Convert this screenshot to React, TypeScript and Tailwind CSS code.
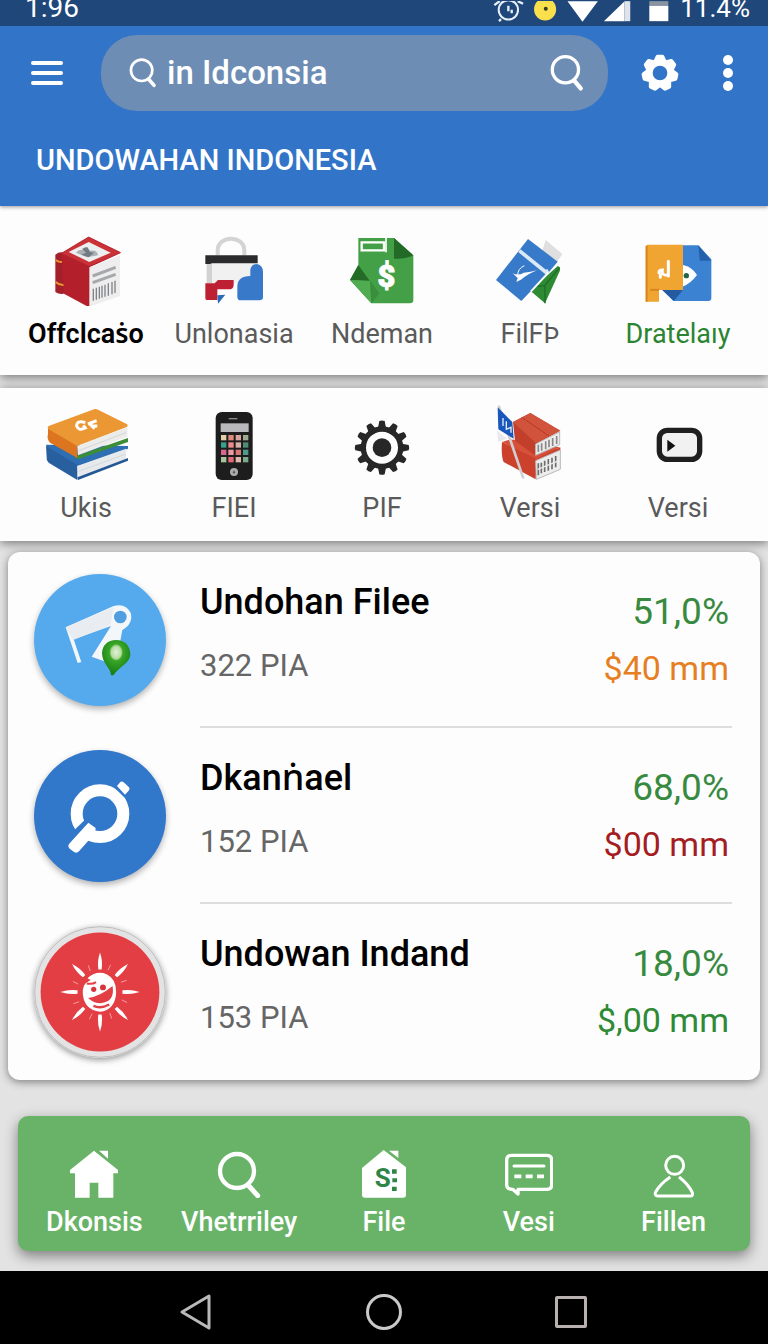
import { useState } from "react";
import type { ReactNode } from "react";
import clsx from "clsx";

interface Category {
  id: string;
  label: string;
  icon: ReactNode;
  tone?: "strong" | "green";
}

interface Item {
  title: string;
  detail: string;
  percent: string;
  amount: string;
  amountClass: string;
  avatar: ReactNode;
}

function Picture({ box, children }: { box: string; children: ReactNode }) {
  return (
    <svg viewBox={box} className="h-[76px] w-[88px]" aria-hidden="true">
      {children}
    </svg>
  );
}

function SearchIcon({ className }: { className: string }) {
  return (
    <svg viewBox="0 0 32 36" className={className} fill="none" stroke="#fff" aria-hidden="true">
      <circle cx="15" cy="15" r="12" strokeWidth="3" />
      <path d="M23 25 L29 32" strokeWidth="4" strokeLinecap="round" />
    </svg>
  );
}

const gearTeeth = [0, 1, 2, 3, 4, 5, 6];

function SettingsIcon() {
  return (
    <svg viewBox="-57 -60 114 120" className="h-10 w-[38px]" aria-hidden="true">
      <g fill="#fff" stroke="#fff" strokeWidth="12" strokeLinejoin="round">
        {gearTeeth.map((n) => (
          <path key={n} d="M-16 -30 L-7 -49 H7 L16 -30 Z" transform={`rotate(${(n * 360) / 7})`} />
        ))}
      </g>
      <circle r="31" fill="none" stroke="#fff" strokeWidth="18" />
    </svg>
  );
}

function StatusBar() {
  return (
    <div className="flex h-[26px] items-end justify-between overflow-hidden bg-[#1f477a] pr-[18px] pb-2 pl-[25px] text-[28px] leading-5 text-white">
      <span>1:96</span>
      <span className="flex items-end">
        <svg viewBox="330 0 530 62" className="-mb-1 mr-2.5 h-[21px] w-[177px]" aria-hidden="true">
          <circle cx="376" cy="26" r="29" fill="none" stroke="#e8f1fa" strokeWidth="6" />
          <path d="M376 14 V30 M386 26 V36 M334 12 L350 0 M404 0 L420 8 M354 54 L348 60" stroke="#e8f1fa" strokeWidth="7" />
          <ellipse cx="486" cy="24" rx="33" ry="34" fill="#fbe04d" />
          <circle cx="488" cy="23" r="6" fill="#3b3a20" />
          <path d="M553 0 H644 L598 62 Z" fill="#fff" />
          <path d="M662 60 L724 0 V60 Z" fill="#fff" />
          <path d="M724 0 H741 V60 H724 Z" fill="#dfe3ea" />
          <path d="M798 0 H855 V14 H798 Z" fill="#8a93a0" />
          <path d="M798 14 H855 V60 H798 Z" fill="#fff" />
        </svg>
        <span className="text-[26px]">11.4%</span>
      </span>
    </div>
  );
}

function Header() {
  const [query, setQuery] = useState("in Idconsia");

  return (
    <header className="relative z-10 bg-[#3274c8] text-white shadow-[0_1px_4px_rgba(0,0,0,0.4)]">
      <StatusBar />
      <div className="flex items-center pt-[9px] pr-[35px] pl-[31px]">
        <button type="button" aria-label="Menu" className="flex w-8 shrink-0 flex-col gap-1.5">
          <span className="h-1 rounded-xs bg-white" />
          <span className="h-1 rounded-xs bg-white" />
          <span className="h-1 rounded-xs bg-white" />
        </button>
        <div className="ml-[38px] flex h-[76px] min-w-0 flex-1 items-center rounded-[36px] bg-[#6d8db5] pr-6 pl-[27px]">
          <SearchIcon className="h-[32px] w-[29px] shrink-0" />
          <input
            type="text"
            aria-label="Search"
            value={query}
            onChange={(e) => setQuery(e.target.value)}
            className="ml-2.5 min-w-0 flex-1 bg-transparent text-[33px] leading-10 font-medium outline-none"
          />
          <button type="button" aria-label="Search" className="shrink-0">
            <SearchIcon className="h-10 w-[35px]" />
          </button>
        </div>
        <button type="button" aria-label="Settings" className="ml-[33px] shrink-0">
          <SettingsIcon />
        </button>
        <button type="button" aria-label="More" className="ml-11 flex shrink-0 flex-col gap-[3px]">
          <span className="size-[10px] rounded-full bg-white" />
          <span className="size-[10px] rounded-full bg-white" />
          <span className="size-[10px] rounded-full bg-white" />
        </button>
      </div>
      <h1 className="px-9 pt-[29px] pb-[26px] text-[29px] leading-10 font-medium">UNDOWAHAN INDONESIA</h1>
    </header>
  );
}

function RedBox() {
  return (
    <Picture box="126 30 264 228">
      <path d="M166 104 Q180 92 196 100 V220 Q180 226 166 216 Z" fill="#a3202a" />
      <path d="M167 120 Q180 130 197 124 M167 186 Q180 198 197 194" fill="none" stroke="#e8962e" strokeWidth="6" />
      <path d="M186 100 L266 52 L360 98 L268 140 L268 260 L194 220 Z" fill="#b3202c" stroke="#b3202c" strokeWidth="4" strokeLinejoin="round" />
      <path d="M186 100 L266 52 L360 98 L268 138 Z" fill="#c93338" />
      <path d="M206 96 L266 66 L332 98 L268 126 Z" fill="#eceeef" />
      <path d="M228 98 Q236 86 250 90 Q250 78 262 82 L270 92 Q292 88 294 106 L262 112 Z" fill="#aab0b4" />
      <path d="M246 86 L262 82 L270 96 L282 98 L266 112 L244 104 L258 98 Z" fill="#737b82" />
      <path d="M268 142 L360 106 V228 L268 260 Z" fill="#eeeeef" />
      <path d="M278 168 L347 142 M278 188 L347 163" stroke="#a7a8ab" strokeWidth="9" />
      <path d="M280 206 V242 M289 203 V239 M298 200 V236 M306 197 V233 M315 194 V230 M325 190 V227 M336 186 V223 M345 182 V219" stroke="#818286" strokeWidth="4" />
    </Picture>
  );
}

function Bag() {
  return (
    <Picture box="584 30 264 228">
      <path d="M667 106 V92 C667 44 747 44 747 92 V106" fill="none" stroke="#d4d4d5" strokeWidth="12" />
      <path d="M634 130 H785 V190 H634 Z" fill="#f1f1f1" />
      <path d="M634 130 H650 V190 H634 Z" fill="#d2d2d2" />
      <path d="M630 106 H787 V130 H650 L644 132 H630 Z" fill="#2b2b2d" />
      <path d="M630 190 H658 L668 180 H715 V194 Q715 208 700 208 H666 V240 H634 Q630 240 630 234 Z" fill="#bd2033" />
      <path d="M666 226 L690 224 L668 251 Z" fill="#2a6bbd" />
      <path d="M726 200 Q726 168 765 168 V148 Q769 132 785 132 Q803 136 803 156 V232 Q803 241 792 241 H736 Q726 241 726 230 Z" fill="#3879ca" />
    </Picture>
  );
}

function MoneyFile() {
  return (
    <Picture box="86 30 264 228">
      <path d="M147 54 H254 L312 106 V240 Q312 250 302 250 H186 L122 180 L147 135 Z" fill="#43a047" />
      <path d="M122 180 L147 135 L182 184 Z" fill="#236b27" />
      <path d="M122 180 L182 182 L186 250 Z" fill="#4fac51" />
      <path d="M182 182 L210 220 L186 250 Z" fill="#388e3c" />
      <path d="M254 54 L312 106 Q290 118 254 116 Z" fill="#236a27" />
      <path d="M157 67 H224 V91 H157 Z" fill="none" stroke="#fff" strokeWidth="7" />
      <path d="M230 50 V97" stroke="#fff" strokeWidth="5" />
      <text x="231" y="202" textAnchor="middle" fontSize="92" fontWeight="900" fill="#fff" stroke="#fff" strokeWidth="3">
        $
      </text>
    </Picture>
  );
}

function Cards() {
  return (
    <Picture box="527 30 264 228">
      <path d="M706 60 L756 102 L740 126 L696 92 Z" fill="#dfdfdf" />
      <path d="M742 138 Q752 142 748 154 L704 250 L660 212 Z" fill="#2e8b34" />
      <path d="M704 250 V196 L748 142 M704 196 L682 200" fill="none" stroke="#1f6d26" strokeWidth="4" />
      <path d="M718 156 L746 120 L734 138 L632 242 Z" fill="#fff" />
      <path d="M653 57 L742 125 L714 158 L633 243 L557 180 Z" fill="#377aca" />
      <path d="M627 92 L706 156 L714 152" fill="none" stroke="#dbe8f7" strokeWidth="11" />
      <path d="M714 158 L662 214" stroke="#fff" strokeWidth="6" />
      <path d="M607 160 Q624 168 640 158 Q662 156 680 151 Q652 162 634 178 L618 186 L622 174 Z" fill="#fff" />
      <path d="M622 166 Q622 146 642 137" fill="none" stroke="#fff" strokeWidth="3" />
    </Picture>
  );
}

function Tickets() {
  return (
    <Picture box="971 30 264 228">
      <path d="M1110 76 H1164 L1203 118 V234 Q1203 243 1194 243 H1090 L1056 210 L1110 206 Z" fill="#3c82d2" />
      <path d="M1164 76 L1203 122 H1168 Z" fill="#2461ad" />
      <path d="M1056 210 H1118 L1090 243 Z" fill="#235aa0" />
      <path d="M1116 134 Q1146 140 1160 165 Q1140 192 1116 200 Z" fill="#fff" />
      <circle cx="1128" cy="167" r="8" fill="#1f6546" />
      <path d="M1010 74 H1118 V210 H1046 V245 H1006 V80 Q1006 74 1012 74 Z" fill="#f0a432" />
      <path d="M1006 78 H1012 V245 H1006 Z M1020 206 H1046 V213 H1020 Z" fill="#d98820" />
      <path d="M1074 124 V168 M1072 166 Q1052 166 1056 150 Q1046 150 1046 158 M1050 164 V172" fill="none" stroke="#fff" strokeWidth="9" strokeLinecap="round" />
    </Picture>
  );
}

function Books() {
  return (
    <Picture box="126 42 264 228">
      <path d="M138 164 L384 168 V176 L234 228 L140 172 Z" fill="#2e6fb4" />
      <path d="M138 168 L232 224 V270 L146 218 Q138 210 140 200 Z" fill="#285f9f" />
      <path d="M232 228 L378 176 V206 L236 260 Z" fill="#e7eaed" />
      <path d="M232 262 L384 204 V212 L234 270 Z" fill="#245894" />
      <path d="M236 244 L378 192" stroke="#d5d9dd" strokeWidth="3" />
      <path d="M222 200 L384 144 V156 L234 208 Z" fill="#3d8c37" />
      <path d="M144 114 L232 166 V204 L150 158 Q140 148 144 132 Z" fill="#dc7420" />
      <path d="M146 108 L282 58 Q288 56 294 59 L380 102 Q386 107 380 111 L232 168 L146 118 Q140 112 146 108 Z" fill="#ea9734" />
      <path d="M232 168 L382 112 V140 L234 196 Z" fill="#ececea" />
      <path d="M236 182 L378 128" stroke="#d6d6d4" strokeWidth="3" />
      <path d="M256 98 Q230 90 230 108 Q236 124 256 114 L250 106 M264 102 L290 92 M266 98 L284 116 M292 108 L272 108" fill="none" stroke="#fff" strokeWidth="9" />
    </Picture>
  );
}

const keyRows = [
  ["#e4cfa8", "#e08b7c", "#d9a49c", "#9fa98f"],
  ["#37a18e", "#f08a8f", "#d8b1a6", "#4f8b75"],
  ["#d9668e", "#ef9aa2", "#d97772", "#4c9b8c"],
  ["#a8c49b", "#e46a78", "#e0b8ae", "#7da98a"],
];

function Phone() {
  return (
    <Picture box="574 42 264 228">
      <rect x="651" y="66" width="111" height="204" rx="18" fill="#1d1d1e" />
      <path d="M690 86 H716" stroke="#8b8b8b" strokeWidth="4" />
      <rect x="666" y="100" width="84" height="26" fill="#b9b9bb" />
      {keyRows.map((row, y) =>
        row.map((color, x) => (
          <rect key={`${x}-${y}`} x={667 + x * 22} y={135 + y * 22} width="16" height="16" fill={color} />
        )),
      )}
      <circle cx="706" cy="246" r="12" fill="#aaacae" />
      <path d="M702 250 L706 240 L710 250 Z" fill="#4a4a4a" />
    </Picture>
  );
}

const cogTeeth = [0, 30, 60, 90, 120, 150, 180, 210, 240, 270, 300, 330];

function Cog() {
  return (
    <Picture box="-132 -131 264 228">
      <g fill="#272727">
        {cogTeeth.map((a) => (
          <path key={a} d="M-12 -60 L-8 -80 Q0 -83 8 -80 L12 -60 Z" transform={`rotate(${a})`} />
        ))}
      </g>
      <circle r="56" fill="none" stroke="#272727" strokeWidth="16" />
      <circle r="28" fill="#272727" />
    </Picture>
  );
}

function FlagBooks() {
  return (
    <Picture box="527 42 264 228">
      <path d="M575 156 L672 200 L750 172 V182 L680 212 L676 268 L580 216 Q572 200 575 156 Z" fill="#cb412c" />
      <path d="M575 156 L600 148 L748 172 L678 206 Z" fill="#d6503a" />
      <path d="M676 212 L750 180 V238 L678 268 Z" fill="#ededed" stroke="#b9b9b9" strokeWidth="3" />
      <path d="M684 220 V256 M693 218 V250 M703 212 V246 M714 207 V242 M725 203 V238 M736 198 V232" stroke="#6d6d6d" strokeWidth="5" />
      <path d="M682 238 L746 212" stroke="#ededed" strokeWidth="4" />
      <path d="M608 96 L660 69 L750 122 L676 162 L674 196 L614 152 Z" fill="#c13f2b" />
      <path d="M608 96 L660 69 L750 122 L676 158 Z" fill="#d2533b" />
      <path d="M634 82 L716 138" stroke="#b93623" strokeWidth="3" />
      <path d="M676 162 L748 126 V164 L676 196 Z" fill="#ededed" stroke="#b9b9b9" strokeWidth="3" />
      <path d="M684 164 V186 M694 160 V182 M706 154 V178 M716 149 V172 M727 144 V168 M739 138 V162" stroke="#888" strokeWidth="5" />
      <path d="M566 50 L638 262" stroke="#cfcfd2" strokeWidth="8" strokeLinecap="round" />
      <path d="M562 52 L606 96 L610 146 L564 118 Z" fill="#1957bd" />
      <path d="M578 84 V108 M588 94 V118 L602 112 V128" fill="none" stroke="#e7effb" strokeWidth="4" />
      <path d="M560 122 L590 146 L564 156 Z" fill="#d4d4d8" opacity="0.5" />
    </Picture>
  );
}

function PlayCard() {
  return (
    <Picture box="977 42 264 228">
      <rect x="1053" y="121" width="121" height="87" rx="24" fill="#f1f1f2" stroke="#1f1f1f" strokeWidth="16" />
      <path d="M1077 149 L1101 167 L1077 185 Z" fill="#111" />
    </Picture>
  );
}

const topCategories: Category[] = [
  { id: "box", label: "Offclcaṡo", icon: <RedBox />, tone: "strong" },
  { id: "bag", label: "Unlonasia", icon: <Bag /> },
  { id: "money", label: "Ndeman", icon: <MoneyFile /> },
  { id: "cards", label: "FilFÞ", icon: <Cards /> },
  { id: "tickets", label: "Dratelaıy", icon: <Tickets />, tone: "green" },
];

const moreCategories: Category[] = [
  { id: "books", label: "Ukis", icon: <Books /> },
  { id: "phone", label: "FIEI", icon: <Phone /> },
  { id: "cog", label: "PIF", icon: <Cog /> },
  { id: "flag", label: "Versi", icon: <FlagBooks /> },
  { id: "play", label: "Versi", icon: <PlayCard /> },
];

function CategoryRow({ items, className }: { items: Category[]; className: string }) {
  return (
    <section className={clsx("grid grid-cols-5 bg-[#fdfdfd] pr-4 pl-3 shadow-[0_2px_10px_rgba(0,0,0,0.5)]", className)}>
      {items.map((item) => (
        <button key={item.id} type="button" className="flex flex-col items-center gap-3">
          {item.icon}
          <span
            className={clsx(
              "text-[27px] leading-8",
              !item.tone && "text-[#5a5a5a]",
              item.tone === "strong" && "font-semibold text-black",
              item.tone === "green" && "text-[#2a8431]",
            )}
          >
            {item.label}
          </span>
        </button>
      ))}
    </section>
  );
}

function MapAvatar() {
  return (
    <svg viewBox="101 76 396 396" className="size-[132px] rounded-full bg-[#55aaed] shadow-[0_3px_6px_rgba(0,0,0,0.3)]" aria-hidden="true">
      <defs>
        <radialGradient id="pin" cx="0.5" cy="0.35" r="0.6">
          <stop offset="0" stopColor="#e3f2d8" />
          <stop offset="0.3" stopColor="#b4dca0" />
          <stop offset="0.4" stopColor="#39a626" />
          <stop offset="1" stopColor="#198017" />
        </radialGradient>
      </defs>
      <path d="M196 236 L340 172 Q376 162 391 192 Q400 224 366 244 L360 276 L318 340 L274 324 L332 232 L220 272 L243 340 L232 343 Z" fill="#f4f7fa" />
      <path d="M196 236 L340 176 L330 230 L218 274 Z" fill="#e9edf2" />
      <circle cx="360" cy="205" r="19" fill="#4f9fe0" />
      <path d="M347 274 C376 274 390 294 390 318 C388 346 352 356 340 380 L332 380 C332 358 306 346 305 314 C306 290 322 274 347 274 Z" fill="url(#pin)" />
    </svg>
  );
}

function LensAvatar() {
  return (
    <svg viewBox="101 58 396 396" className="size-[132px] rounded-full bg-[#3177ca] shadow-[0_3px_6px_rgba(0,0,0,0.3)]" aria-hidden="true">
      <circle cx="299" cy="249" r="70" fill="none" stroke="#fff" strokeWidth="36" />
      <path d="M222 298 L262 260 L292 290 L252 340 Z" fill="#3177ca" />
      <path d="M264 276 L286 292 L284 308 L236 362 Q228 370 218 362 L208 354 Q200 346 208 338 Z" fill="#fff" />
      <path d="M360 154 Q364 150 370 155 L386 170 Q390 176 385 180 L374 192 L350 166 Z" fill="#fff" />
      <path d="M342 168 L374 198" stroke="#3177ca" strokeWidth="5" />
    </svg>
  );
}

const rays = [0, 45, 90, 135, 180, 225, 270, 315];

function SunAvatar() {
  return (
    <svg viewBox="-200 -200 400 400" className="size-[132px] rounded-full bg-[#e4e3e3] shadow-[0_2px_6px_rgba(0,0,0,0.4)]" aria-hidden="true">
      <circle r="198" fill="none" stroke="#bdbdbd" strokeWidth="3" />
      <circle r="180" fill="#e33e44" />
      {rays.map((a) => (
        <g key={a} transform={`rotate(${a})`}>
          <path d="M-5 -68 Q-9 -94 0 -120 Q9 -94 5 -68 Z" fill="#fff" />
          <path d="M0 -70 L2 -88" stroke="#f6c5c4" strokeWidth="2" transform="rotate(20)" />
        </g>
      ))}
      <path d="M-38 -42 Q-10 -66 20 -54 Q50 -40 49 2 Q46 54 0 60 Q-48 54 -52 6 Q-54 -22 -38 -30 L-28 -36 Z" fill="#fff" />
      <path d="M-36 18 Q0 14 38 -18 Q46 30 2 34 Q-20 34 -36 18 Z" fill="#e33e44" />
      <path d="M-20 42 Q2 52 28 38" fill="none" stroke="#e33e44" strokeWidth="7" />
      <path d="M-40 -26 Q-24 -22 -12 -30" fill="none" stroke="#e33e44" strokeWidth="6" />
      <circle cx="-19" cy="-8" r="8" fill="#d6363c" />
      <circle cx="9" cy="-14" r="9" fill="#d6363c" />
    </svg>
  );
}

const items: Item[] = [
  {
    title: "Undohan Filee",
    detail: "322 PIA",
    percent: "51,0%",
    amount: "$40 mm",
    amountClass: "text-[#e67f22]",
    avatar: <MapAvatar />,
  },
  {
    title: "Dkanṅael",
    detail: "152 PIA",
    percent: "68,0%",
    amount: "$00 mm",
    amountClass: "text-[#a31d22]",
    avatar: <LensAvatar />,
  },
  {
    title: "Undowan Indand",
    detail: "153 PIA",
    percent: "18,0%",
    amount: "$,00 mm",
    amountClass: "text-[#2f8a35]",
    avatar: <SunAvatar />,
  },
];

function ItemList() {
  return (
    <ul className="mx-2 mt-[11px] rounded-xl bg-[#fdfdfd] pr-7 pb-0.5 pl-[26px] shadow-[0_2px_8px_rgba(0,0,0,0.45)]">
      {items.map((item, i) => (
        <li key={item.title} className="flex gap-[34px]">
          <div className="shrink-0 pt-[22px]">{item.avatar}</div>
          <div
            className={clsx(
              "flex min-w-0 flex-1 justify-between pb-[30px]",
              i < items.length - 1 && "border-b-2 border-[#dcdddf]",
            )}
          >
            <div className="pt-[26px]">
              <h2 className="text-[36px] leading-[48px] font-medium text-black">{item.title}</h2>
              <p className="mt-5 text-[31px] leading-10 text-[#666]">{item.detail}</p>
            </div>
            <div className="pt-8 pr-[3px] text-right">
              <p className="text-[37px] leading-[56px] text-[#388a3e]">{item.percent}</p>
              <p className={clsx("text-[34px] leading-[56px]", item.amountClass)}>{item.amount}</p>
            </div>
          </div>
        </li>
      ))}
    </ul>
  );
}

const navItems = [
  {
    label: "Dkonsis",
    icon: (
      <svg viewBox="216 148 144 144" className="size-12" aria-hidden="true">
        <path d="M288 150 L360 208 V218 H346 V291 H301 V246 H275 V291 H231 V218 H216 V208 Z" fill="#fff" />
        <path d="M303 150 H330 V174 Z" fill="#fff" />
      </svg>
    ),
  },
  {
    label: "Vhetrriley",
    icon: (
      <svg viewBox="642 152 144 144" className="size-12" fill="none" stroke="#fff" aria-hidden="true">
        <circle cx="708" cy="215" r="51" strokeWidth="13" />
        <path d="M742 258 L770 289" strokeWidth="15" strokeLinecap="round" />
      </svg>
    ),
  },
  {
    label: "File",
    icon: (
      <svg viewBox="1077 150 144 144" className="size-12" aria-hidden="true">
        <path d="M1148 150 L1215 202 V284 Q1215 293 1206 293 H1092 Q1083 293 1083 284 V204 Z M1164 152 H1192 V174 Z" fill="#fff" />
        <text x="1145" y="260" textAnchor="middle" fontSize="78" fontWeight="700" fill="#2f8546">
          S
        </text>
        <path d="M1173 208 h14 v13 h-14 Z M1174 235 h14 v12 h-14 Z M1173 260 h14 v13 h-14 Z" fill="#2f8546" />
      </svg>
    ),
  },
  {
    label: "Vesi",
    icon: (
      <svg viewBox="363 150 144 144" className="size-12" aria-hidden="true">
        <path
          d="M382 166 H488 Q503 166 503 181 V254 Q503 268 488 268 H402 V282 L386 268 Q368 268 368 254 V181 Q368 166 382 166 Z"
          fill="none"
          stroke="#fff"
          strokeWidth="10"
          strokeLinejoin="round"
        />
        <path d="M390 198 H480" stroke="#fff" strokeWidth="9" strokeLinecap="round" />
        <path d="M391 229 H412 M425 229 H446 M459 229 H480" stroke="#fff" strokeWidth="11" />
      </svg>
    ),
  },
  {
    label: "Fillen",
    icon: (
      <svg viewBox="801 150 144 144" className="size-12" fill="none" stroke="#fff" strokeWidth="9" strokeLinejoin="round" aria-hidden="true">
        <circle cx="875" cy="196" r="27" />
        <path d="M862 231 Q830 252 817 278 Q815 288 824 288 H922 Q931 288 928 278 Q916 252 888 231" />
      </svg>
    ),
  },
];

function BottomNav() {
  return (
    <nav className="mx-[18px] mt-9 grid grid-cols-5 rounded-[10px] bg-[#69b368] px-1 pt-[34px] pb-[13px] shadow-[0_5px_14px_rgba(0,0,0,0.45)]">
      {navItems.map((item) => (
        <a key={item.label} href="#" className="flex flex-col items-center gap-2 text-white">
          {item.icon}
          <span className="text-[27px] leading-8 font-medium">{item.label}</span>
        </a>
      ))}
    </nav>
  );
}

function SystemBar() {
  return (
    <div className="mt-5 grid flex-1 grid-cols-3 place-items-center bg-black px-[103px] pt-5 pb-[11px]">
      <button type="button" aria-label="Back">
        <svg viewBox="0 0 36 42" className="h-[42px] w-9" fill="none" stroke="#b9b9b9" strokeWidth="3" strokeLinejoin="round" aria-hidden="true">
          <path d="M3 21 L30 5 V37 Z" />
        </svg>
      </button>
      <button type="button" aria-label="Home">
        <span className="block size-9 rounded-full border-3 border-[#c9c9c9]" />
      </button>
      <button type="button" aria-label="Recent">
        <span className="block size-8 rounded-xs border-3 border-[#b9b0b0]" />
      </button>
    </div>
  );
}

export default function App() {
  return (
    <div className="flex min-h-screen flex-col bg-[#e3e3e4] font-[Roboto,'Noto_Sans',sans-serif]">
      <Header />
      <CategoryRow items={topCategories} className="pt-6 pb-[25px]" />
      <CategoryRow items={moreCategories} className="mt-[13px] pt-4 pb-[17px]" />
      <ItemList />
      <BottomNav />
      <SystemBar />
    </div>
  );
}
